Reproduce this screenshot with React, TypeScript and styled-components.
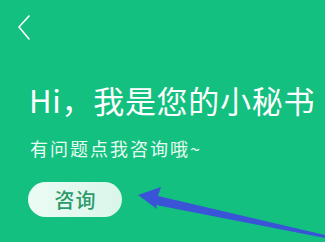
import styled, { createGlobalStyle } from 'styled-components';

const GlobalStyle = createGlobalStyle`
  html, body {
    margin: 0;
    padding: 0;
    background: #13c07f;
  }
  body {
    font-family: "Noto Sans CJK SC", "Noto Sans", sans-serif;
  }
`;

const Page = styled.div`
  position: relative;
  width: 325px;
  height: 242px;
  overflow: hidden;
  background: #13c07f;
  display: flex;
  flex-direction: column;
`;

const TopBar = styled.div`
  display: flex;
  align-items: center;
  padding: 13px 16px 0;
  height: 28px;
`;

const BackButton = styled.button`
  border: 0;
  padding: 0;
  background: transparent;
  width: 16px;
  height: 28px;
  cursor: pointer;
  display: block;
`;

const Content = styled.div`
  display: flex;
  flex-direction: column;
  align-items: flex-start;
  padding-left: 29px;
  margin-top: 43px;
`;

const Title = styled.h1`
  margin: 0;
  font-size: 31px;
  line-height: 1;
  font-weight: 400;
  letter-spacing: 0.7px;
  color: #ffffff;
  white-space: nowrap;
`;

const Subtitle = styled.p`
  margin: 24px 0 0 1px;
  font-size: 18px;
  line-height: 1;
  letter-spacing: 2px;
  color: #e8fbf2;
  white-space: nowrap;
`;

const ConsultButton = styled.button`
  margin-top: 25px;
  margin-left: -1px;
  width: 94px;
  height: 35px;
  border: 0;
  border-radius: 18px;
  background: linear-gradient(90deg, #ecfcf5 0%, #d9f6e9 100%);
  color: #2e9a69;
  font-family: "Noto Sans CJK SC", sans-serif;
  font-size: 20px;
  font-weight: 500;
  letter-spacing: 1px;
  line-height: 1;
  padding: 0 0 0 1px;
  cursor: pointer;
`;

const Pointer = styled.svg`
  position: absolute;
  left: 0;
  top: 0;
  pointer-events: none;
`;

export default function App() {
  return (
    <>
      <GlobalStyle />
      <Page>
        <TopBar>
          <BackButton aria-label="返回">
            <svg width="16" height="28" viewBox="0 0 16 28">
              <polyline
                points="13,3 3,14 13,26"
                fill="none"
                stroke="#ffffff"
                strokeWidth="1.6"
                strokeLinecap="round"
                strokeLinejoin="round"
              />
            </svg>
          </BackButton>
        </TopBar>
        <Content>
          <Title>Hi，我是您的小秘书</Title>
          <Subtitle>有问题点我咨询哦~</Subtitle>
          <ConsultButton>咨询</ConsultButton>
        </Content>
        {/* annotation arrow drawn over the page */}
        <Pointer width="325" height="242" viewBox="0 0 325 242">
          <polygon
            points="138,195 161,187 158,196 325,235 325,238 156,205 157,209"
            fill="#3a54d8"
          />
        </Pointer>
      </Page>
    </>
  );
}
